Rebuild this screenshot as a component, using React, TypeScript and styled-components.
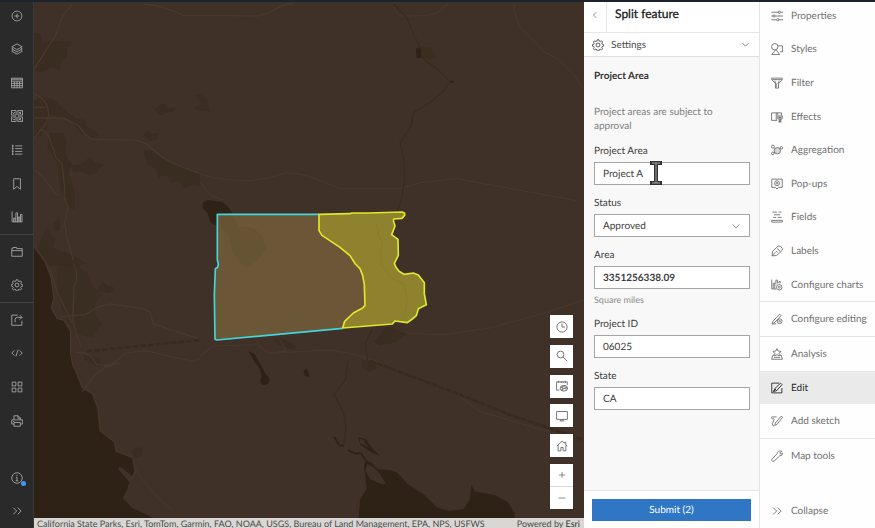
import React from "react";
import styled, { createGlobalStyle } from "styled-components";

const GlobalStyle = createGlobalStyle`
  *, *::before, *::after { box-sizing: border-box; }
  body { margin: 0; }
  body, button, input, select {
    font-family: Lato, "Open Sans", "Liberation Sans", sans-serif;
    font-size: 10px;
    text-rendering: geometricPrecision;
  }
  button { border: 0; background: none; padding: 0; margin: 0; color: inherit; cursor: pointer; }
`;

const Page = styled.div`
  display: flex;
  height: 100vh;
  overflow: hidden;
  border-top: 2px solid #1d232e;
  color: #323232;
`;

/* ---------- icons ---------- */

const Svg = styled.svg<{ $size: number }>`
  display: block;
  flex: none;
  width: ${(p) => p.$size}px;
  height: ${(p) => p.$size}px;
  fill: none;
  stroke: currentColor;
  stroke-width: 1.2;
`;

const shapes = {
  plusCircle: <><circle cx="8" cy="8" r="6.6" /><path d="M8 4.8v6.4M4.8 8h6.4" /></>,
  layers: (
    <>
      <path d="M8 1.2 15 5 8 8.800 1 5z" />
      <path d="M2.800 7 1 8l7 3.800L15 8l-1.800-1M2.800 10 1 11l7 3.800 7-3.800-1.800-1" />
    </>
  ),
  table: <><path d="M.6 1.600h14.800v12.800H.6zM.6 3h14.800M.6 5.500h14.800M4.500 5.500v9M8 5.500v9M11.500 5.500v9M.6 8.500h14.800M.6 11.500h14.800" /></>,
  basemap: (
    <>
      <path d="M.6.6h6.200v6.200H.6zM9.200.6h6.200v6.200H9.200zM.6 9.200h6.200v6.200H.6zM9.200 9.200h6.200v6.200H9.200z" />
      <path d="m2 3 1.500 2L5.500 2.500M10.500 2.500l3 3M13.500 2l-2 3M2 11.500l2 2 2-2.500M10.500 13.500l3-3M11 11l2.500 3" />
    </>
  ),
  legend: <path d="M5.500 2.500H15M5.500 6.200H15M5.500 9.900H15M5.500 13.500H15M1.200 2.500h2.200M1.200 6.200h2.200M1.200 9.900h2.200M1.200 13.500h2.200M2.300.8v14" />,
  bookmark: <path d="M3.500 1h9v14L8 11.300 3.500 15z" />,
  chart: <path d="M1.500.5v14H15M3.500 14.500v-5h2v5M6.500 14.500v-12h2.200v12M9.700 14.500V8h2v6.500M12.700 14.500V4.500h2v10" />,
  folder: <path d="M1 13.700V3.500h1.500V2h5v1.500H15v10.200zM1 6.200h14" />,
  gear: (
    <>
      <circle cx="8" cy="8" r="2.600" />
      <path d="M6.900 1h2.200l.4 1.800 1.500.6 1.600-1 1.500 1.600-1 1.600.6 1.500 1.800.4v2l-1.800.4-.6 1.500 1 1.600-1.500 1.600-1.600-1-1.500.6-.4 1.800H6.900l-.4-1.800-1.500-.6-1.600 1L1.900 13l1-1.600-.6-1.500-1.800-.4v-2l1.800-.4.6-1.500-1-1.600 1.500-1.600 1.600 1 1.500-.6z" />
    </>
  ),
  share: <path d="M9 1.500H1v13.500h13.500v-6M5.500 11V7.500q0-3 3-3h6M11.700 1.500l3 3-3 3" />,
  code: <path d="M4.500 4.500 1 8l3.500 3.500M11.500 4.500 15 8l-3.500 3.500M9.500 3.500l-3 9" />,
  grid: <path d="M1.500 1.500h5v5h-5zM9.500 1.500h5v5h-5zM1.500 9.500h5v5h-5zM9.500 9.500h5v5h-5z" />,
  print: (
    <>
      <path d="M4 6.500V1h5.500l3 3v2.500M9.200 1v3.200h3.200M4 12H1V6.500h14.500V12h-3M2.800 8.700h1.500" />
      <path d="M4 10h8.500v5H4z" />
    </>
  ),
  info: <><circle cx="8" cy="8" r="7" /><path d="M8 3.800v1.700M6.500 7.200H8v4.500M6.300 11.700h3.400" /></>,
  doubleRight: <path d="M3 3.500 7.500 8 3 12.500M9 3.500 13.500 8 9 12.500" />,
  clock: <><circle cx="8" cy="8" r="6.800" /><path d="M8 3.500V8h4" /></>,
  search: <><circle cx="6" cy="6" r="4.500" /><path d="m9.300 9.300 5.500 5.500" /></>,
  calendar: (
    <>
      <path d="M4.500 13.500H.800v-11H15v4M3.500 1v3M7 2v2M9.500 2v2M12.500 1v3" />
      <ellipse cx="10.500" cy="11" rx="5" ry="3.800" />
      <path d="M5.800 10.500q4-4 9 0M7 13q3-3 8-1M9 8.500v5" />
    </>
  ),
  monitor: <path d="M.800 2h14.400v10.500H.800zM5 14.500h6M6.500 12.500v2M9.500 12.500v2" />,
  home: <path d="M1 8.300 8 1.500l3 2.800V3h2v3.200l2 2.100M2.800 7v7.500h3.700V10h3v4.500h3.700V7" />,
  plus: <path d="M8 3v10M3 8h10" />,
  minus: <path d="M2.500 8h11" />,
  left: <path d="M10 3.500 5.500 8l4.500 4.500" />,
  down: <path d="M2.500 5.500 8 11l5.500-5.500" />,
  sliders: (
    <>
      <path d="M.5 3h9M12.500 3H16M.5 8h2M5.500 8H16M.5 13h7M10.500 13H16" />
      <circle cx="11" cy="3" r="1.500" /><circle cx="4" cy="8" r="1.500" /><circle cx="9" cy="13" r="1.500" />
    </>
  ),
  styles: (
    <>
      <circle cx="5" cy="5" r="4.200" />
      <path d="M9 3.800h6.300v8H12M6.500 8.500 11.500 15.300H1z" />
    </>
  ),
  filter: <path d="M1 1.500h14v2L10 9v5.800H6V9L1 3.500zM1.500 3.500h13M5 5l2 4.500V14M11 5 9 9" />,
  effects: (
    <>
      <path d="M8 12.500H.800v-10H14V6M7 2.500v10M9 2.500v3.500" />
      <path d="M9 6.500h6v4H9z" /><path d="M11 10.500v4h2v-4M10 8.500h4" strokeWidth="1.600" />
    </>
  ),
  aggregation: (
    <>
      <circle cx="8.500" cy="9" r="4.200" fill="currentColor" fillOpacity=".25" />
      <circle cx="2.500" cy="3.500" r="2" /><circle cx="2.500" cy="12.500" r="1.700" /><circle cx="14" cy="5" r="1.600" />
      <path d="m4 5 1.500 1.500M4 11.800l1-.8M12.600 6l-1 .8" />
    </>
  ),
  popup: (
    <>
      <path d="M1 1.500h14v11h-5l-2 2.300-2-2.300H1z" />
      <circle cx="8" cy="7" r="3.300" /><circle cx="8" cy="7" r="1.100" />
    </>
  ),
  fields: <path d="M2 1.500h6M10 1.500h4M4 5h8M3 8.500h4M9 8.500h5M1 12.500h14v2.300H1z" />,
  label: (
    <>
      <path d="m1.500 14.500.5-6L9.500 1.500h3l2.500 3v2.500L7.500 14z" />
      <path d="M1.500 14.500 6 9.500M8.500 4.500l4 4.500M6.500 8l2 2" />
    </>
  ),
  chartGear: (
    <>
      <path d="M1 .800v12.500h6M3 13V5.500h2V13M6.500 7V1.500h2V6M10.500 5.500V3.500h2v2" />
      <circle cx="11" cy="11" r="3.700" /><circle cx="11" cy="11" r="1.300" />
    </>
  ),
  editGear: (
    <>
      <path d="m1.500 14.500 1-3.500L11.500 1.500l2 2-9 9.500zM1.500 14.500H7" />
      <circle cx="11.500" cy="11" r="3.200" /><circle cx="11.500" cy="11" r="1" />
    </>
  ),
  analysis: (
    <>
      <path d="M8 .800 9.500 4l4 .5-2.800 2.500.6 3.500L8 9l-3.300 1.500.6-3.500L2.500 4.500l4-.5z" />
      <path d="M4 9.500H2.500L.800 15h14.400l-1.700-5.500H12M4 12.500h8" />
    </>
  ),
  edit: (
    <>
      <path d="M11 1.500H1v13h13.500V8" />
      <path d="m4 12.500 1-3.500 7.800-7.500 2 2L7.500 11.500zM5 9l2.500 2.500" />
      <path d="m2.500 13.500 2-3" />
    </>
  ),
  sketch: (
    <>
      <path d="M7.500 2.500H1.500q-1 0-1 1.200T2 5h1.500q1 .3.500 1.500L2 11.500Q1.500 14.500 4 14.500" />
      <path d="m5 14 .8-3.300 7.700-9.200 2 1.700-7.500 9.200z" />
    </>
  ),
  wrench: <path d="M14.300 1.500 12 3.800l.5 1.500 1.500-.1 1.300-1.400q.5 4-3.800 4L4 15 2 15.200 1 14v-1.700L8.300 5q0-4.500 6-3.500z" />,
};

type IconName = keyof typeof shapes;

const Icon = ({ name, size = 12 }: { name: IconName; size?: number }) => (
  <Svg viewBox="0 0 16 16" $size={size} aria-hidden="true">
    {shapes[name]}
  </Svg>
);

/* ---------- left rail ---------- */

const Rail = styled.nav`
  flex: 0 0 34px;
  display: flex;
  flex-direction: column;
  margin-top: -3px;
  background: #2a2a2a;
  border-right: 1px solid #3c3a38;
  color: #a5a5a5;
`;

const RailGroup = styled.div<{ $rows: number; $divided?: boolean }>`
  flex: ${(p) => p.$rows} 1 0;
  display: flex;
  flex-direction: column;
  border-bottom: ${(p) => (p.$divided ? "1px solid #454545" : "0")};
`;

const RailButton = styled.button`
  flex: 1 1 0;
  display: flex;
  align-items: center;
  justify-content: center;
`;

const Spacer = styled.div<{ $grow: number }>`
  flex: ${(p) => p.$grow} 1 0;
`;

const Notified = styled.span`
  position: relative;
`;

const Dot = styled.span`
  position: absolute;
  right: -3px;
  bottom: -2px;
  width: 5px;
  height: 5px;
  border-radius: 50%;
  background: #3d9bf5;
`;

/* ---------- map ---------- */

const MapArea = styled.main`
  position: relative;
  flex: 1 1 0;
  min-width: 0;
  display: flex;
  flex-direction: column;
  background: #3f3127;
`;

const MapDrawing = styled.svg`
  display: block;
  flex: 1 1 0;
  min-height: 0;
  width: 100%;
`;

const Attribution = styled.footer`
  flex: 0 0 10px;
  display: flex;
  justify-content: space-between;
  padding: 0 4px 0 3px;
  background: #d9d6d3;
  color: #4c4c4c;
  font-size: 9px;
  line-height: 12px;
  white-space: nowrap;
  overflow: hidden;

  a { color: #323232; }
`;

const MapControls = styled.div`
  position: absolute;
  right: 11px;
  bottom: 19px;
  display: flex;
  flex-direction: column;
  gap: 7px;
`;

const ToolStack = styled.div`
  display: flex;
  flex-direction: column;
  justify-content: space-between;
  height: 142px;
`;

const MapButton = styled.button<{ $height?: number }>`
  display: flex;
  align-items: center;
  justify-content: center;
  width: 23px;
  height: ${(p) => p.$height ?? 23}px;
  background: #fff;
  color: #6a6a6a;
`;

const ZoomPair = styled.div`
  display: grid;
  gap: 1px;
  background: #dcdcdc;
`;

const Basemap = () => (
  <MapDrawing viewBox="102 6 1650 1548" preserveAspectRatio="xMidYMid slice" role="img" aria-label="Map of project areas">
    <rect x="102" y="6" width="1650" height="1548" fill="#3f3127" />
    {/* urban patches */}
    <g fill="#392c20">
      <path d="M102 100l18 0 8 30 20-8 50 4 16-6 0 16-14 6 2 30-18 12-6 26-26-8-30 16-20-8z" />
      <path d="M118 288l40 10 50 42 20 16 26 4 6 20 30 16 10 12-30 6-30-16-26-36-60-16-46-2-16-20z" />
      <path d="M102 300l30 6 14 30-4 44-20 26-20 8z" />
      <path d="M150 400l40-2 10 24-4 40 20 30-10 30 18 50 0 56-20-8-22-50-10-80-30-50z" />
      <path d="M215 498l30-6 22-20 20 14 26 10-18 12-4 10-28 6-18-10-26 2z" />
      <path d="M464 328l22-18 12 6 2 10 26-4-2 12-24 4-16 8-8-6z" />
      <path d="M584 322l16-4 4-12-14-12-4-12 16 2 20 12 4 26 6 12-20-2-26-4z" />
      <path d="M430 450l30 2 40 30 54 20 46 24 0 32-20-4-30 10-14-22-22 8-12-26-26 8-10-26-24-14z" />
      <path d="M430 404l14-14 10 12 24-2-10 20-20 4z" />
      <path d="M160 668l14-12 8 14-6 24-14-4zM130 700l12-20 8 24 16 10-8 30 60 20 40 26-30 8-80-2-34-50z" />
      <path d="M170 792l60 0 34 30 16 40 30 20-26 30 4 40 20 20-30 40-50-10-40-60-16-90z" opacity=".7" />
      <path d="M298 858l10-14 12 12 24 8 0 10-16 6-34-8zM392 1352l22-10 14 2-4 22-16 8z" />
      <path d="M250 1064l50 10 4 28-20-6-30-18z" />
      <path d="M820 1016l30 0 36 20 0 14-30-6-26-12z" />
    </g>
    {/* ocean */}
    <path
      fill="#2e2217"
      d="M102 738l34 48 18 50 8 60-8 26 18 34 20 4 20 34 0 64 6 36 14 30 14 38 32 20 16 44 6 66 44 34 4 28 50 18 8 42-10 14-24-20-14-8-4 6 34 40-6 20-14 28 14 14 14 16 22 10 42 20H102z"
    />
    <path fill="none" stroke="#46372a" strokeWidth="4" d="M102 738l34 48 18 50 8 60-8 26 18 34 20 4 20 34 0 64 6 36 14 30 14 38 32 20 16 44 6 66 44 34 4 28 50 18 8 42-10 24" />
    {/* roads on the coast */}
    <g fill="none" stroke="#47392c" strokeWidth="4">
      <path d="M218 12q-34 34-40 64l-14 36-24 36-38 60" />
      <path d="M102 322h36M102 354h90l44 24 20 26 20 14 130 2 34 12q30 30 70 54l86 34" />
      <path d="M102 282q44 16 44 64-4 26-24 44l-20 26M124 388q24 14 30 44l14 40 18 20 8 70-2 28 12 30-10 50 8 50 18 60" />
      <path d="M102 510q26 14 44 44l30 36M222 792q16 34 0 70l-4 100 8 30 18 50M148 800l22 70 46 100M180 950l76-6 44-26 30-6 100 14 20 10 10 36 130 42" />
      <path d="M230 1058q40-6 60 36l40 4 46-38 60-8 140 32 24-8M246 1174l40-50 40-30 36-4" />
      <path d="M408 1400l12 30 50 60 50 44" opacity=".6" />
      <path d="M430 12q60 4 120 34l90 0 130 2q30-4 60-22t50-14" />
    </g>
    {/* roads inland */}
    <g transform="translate(600 0)" fill="none" stroke="#47392c" strokeWidth="3">
      <path d="M580 12q6 40 30 36 80 0 100-8l34-28M942 12q4 50 20 70l40 40 30 34 40 20q50 40 72 84" />
      <path d="M0 522q60 20 150 20 60-6 110-24 60 6 80 16l80 32h180l60-18 110-12 360 66" />
      <path d="M0 546l30 40 40 14M0 1068l40-30 130-4 40 26 180-10 60 10 100 30M570 990l60 10 100 4 140-20 160-44 120-40" />
      <path d="M240 1020l20 34-60 6-30-34M780 1190l60 44 80 24 100 30 130 30" />
    </g>
    {/* rivers, lakes and the border */}
    <g transform="translate(600 0)">
      <g fill="none" stroke="#382b1f" strokeWidth="4">
        <path d="M580 12l40 40 20 50 20 40M670 176l40 30 40 38-20 30-40 34-50 30-6 40-34 50 10 40 4 70-10 60-16 50-20 30" />
        <path d="M444 1080l-8 60-34 44 28 50 8 50-6 50M516 990l-20 40 6 50" />
      </g>
      <path d="M402 1310l16 26 14 2M444 1350l20 10 20 0 16 26" fill="none" stroke="#2e2217" strokeWidth="5" />
      <path d="M-340 1054L-180 1038 0 1020" fill="none" stroke="#382b1e" strokeWidth="8" strokeDasharray="18 5" />
      <path d="M510 1082l160 60 130 50 130 52 220 76" fill="none" stroke="#382b1e" strokeWidth="8" strokeDasharray="18 4" />
      <g fill="#2e2217">
        <path d="M8 608l14-8 44 6 18 14 14 20-42 2 0 40-24-14-10-30-14-14z" />
        <path d="M648 146l14-4 2 32-14 0zM750 242l12 2-4 6-8-4z" />
        <path d="M146 1054l18 8 20 36 14 26 10 14-2 10-10 8-10-2-6-12 6-14-10-26-16-22z" />
        <circle cx="195" cy="1139" r="13" />
        <path d="M310 1112l10-6 8 18 0 8-12-4z" />
        <path
          fillRule="evenodd"
          d="M496 1382l20 6 16 20 40 2 20 8 34 36 44 28 40 40 34 10 46-4 20-30 4-44 10 20 60 12 40 20 20 34 0 14H476l4-54 20-34-8-70zM502 1392l-6 20 14 26 40 16 6-6-16-26-20-20z"
        />
        <path fillRule="evenodd" d="M474 1312l22 4 20 28 24 24-28-12-30-22zM480 1316l0 12 26 16-16-24z" />
      </g>
      <path d="M664 140l30 2 14 32-20 4-24-8z" fill="#3b2e1e" />
      <path d="M486 1080l40 4 0 24-20 8-20-14zM560 980l60 20-30 26-50 10-20-10z" fill="#392c20" />
    </g>
    {/* the two halves of the split feature */}
    <g transform="translate(600 0)" strokeLinejoin="round" strokeWidth="5">
      <path
        fill="#6b5638"
        d="M52 643H357V692L366 706 420 742 450 767 466 792 480 806 488 826 493 854 495 916 488 924 460 939 434 964 428 985 50 1020 45 1018 43 884 46 806 53 802 55 792 52 780z"
      />
      <path d="M60 650l34-6 24 36 44 4 24 26 14 34-14 14-14 24-28 20-20-10-26-40-14-52-22-20z" fill="#655333" />
      <path d="M357 643H52V780L55 792 53 802 46 806 43 884 45 1018 50 1020 428 985" fill="none" stroke="#42d5da" />
      <path
        fill="#8e822f"
        stroke="#dfe82c"
        d="M357 643L450 641 455 639 505 639 607 636 614 640 614 646 606 655 582 657 580 662 585 678 575 704 594 718 595 766 583 790 588 802 597 814 612 823 640 819 655 825 673 848 673 882 679 914 655 926 649 947 637 957 622 968 585 963 577 972 428 984 434 964 460 939 488 924 495 916 493 854 488 826 480 806 466 792 450 767 420 742 366 706 357 692z"
      />
      <path d="M530 670l6 36 10 20-4 66 30 40 40 20 10 50-8 40" fill="none" stroke="#897d2d" strokeWidth="3" />
    </g>
  </MapDrawing>
);

/* ---------- edit panel ---------- */

const Panel = styled.section`
  flex: 0 0 176px;
  display: flex;
  flex-direction: column;
  background: #f8f8f8;
  border-right: 1px solid #e4e4e4;
`;

const PanelHeader = styled.header`
  display: flex;
  align-items: stretch;
  height: 31px;
  background: #fff;
  border-bottom: 1px solid #e6e6e6;
`;

const BackButton = styled.button`
  display: flex;
  justify-content: center;
  width: 23px;
  padding-top: 8px;
  border-right: 1px solid #e6e6e6;
  color: #6a6a6a;
`;

const PanelTitle = styled.h2`
  margin: 0;
  padding: 4px 8px;
  font-size: 12px;
  line-height: 16px;
  font-weight: 400;
  color: #202020;
  -webkit-text-stroke: 0.3px;
`;

const SettingsRow = styled.button`
  display: flex;
  align-items: center;
  gap: 7px;
  height: 24px;
  padding: 0 9px 0 8px;
  background: #fff;
  border-bottom: 1px solid #e0e0e0;
  color: #4a4a4a;

  span { flex: 1; text-align: left; }
`;

const Form = styled.form`
  flex: 1;
  display: flex;
  flex-direction: column;
`;

const Fields = styled.div`
  flex: 1;
  display: flex;
  flex-direction: column;
  gap: 10px;
  padding: 11px 9px 10px 10px;
`;

const FormIntro = styled.div`
  display: flex;
  flex-direction: column;
  gap: 21px;
`;

const FormTitle = styled.h3`
  margin: 0;
  font-size: 10px;
  line-height: 16px;
  font-weight: 700;
`;

const Description = styled.p`
  margin: 0;
  line-height: 14px;
  color: #7c7c7c;
`;

const Field = styled.div`
  display: flex;
  flex-direction: column;
`;

const Label = styled.label`
  margin-bottom: 3px;
  line-height: 16px;
  color: #3c3c3c;
`;

const Control = styled.div`
  position: relative;
  display: flex;
`;

const Input = styled.input<{ $strong?: boolean }>`
  width: 100%;
  height: 23px;
  padding: 0 8px;
  border: 1px solid #a6a6a6;
  border-radius: 0;
  background: #fff;
  color: #3c3c3c;
  font-weight: ${(p) => (p.$strong ? 700 : 400)};
`;

const Select = styled.select`
  appearance: none;
  width: 100%;
  height: 23px;
  padding: 0 24px 0 8px;
  border: 1px solid #a6a6a6;
  border-radius: 0;
  background: #fff;
  color: #3c3c3c;
`;

const SelectArrow = styled.span`
  position: absolute;
  right: 9px;
  top: 7px;
  color: #6a6a6a;
  pointer-events: none;
`;

const Hint = styled.span`
  margin-top: 4px;
  font-size: 9px;
  line-height: 13px;
  color: #8a8a8a;
`;

const Cursor = styled.svg`
  position: absolute;
  left: 56px;
  top: -1px;
  width: 12px;
  height: 24px;
`;

const PanelFooter = styled.footer`
  padding: 8px 8px 7px;
  background: #fff;
  border-top: 1px solid #e6e6e6;
`;

const Submit = styled.button`
  display: block;
  width: 100%;
  height: 22px;
  background: #2f77c4;
  color: #fff;
`;

/* ---------- right menu ---------- */

const Menu = styled.nav`
  flex: 0 0 115px;
  display: flex;
  flex-direction: column;
  margin-top: -3px;
  background: #fefefe;
`;

const MenuGroup = styled.div<{ $rows: number; $divided?: boolean }>`
  flex: ${(p) => p.$rows} 1 0;
  display: flex;
  flex-direction: column;
  border-bottom: ${(p) => (p.$divided ? "1px solid #e4e4e4" : "0")};
`;

const MenuButton = styled.button<{ $active?: boolean }>`
  flex: 1 1 0;
  display: flex;
  align-items: center;
  gap: 8px;
  padding-left: 11px;
  white-space: nowrap;
  background: ${(p) => (p.$active ? "#eaeaea" : "transparent")};
  color: ${(p) => (p.$active ? "#2b2b2b" : "#707070")};
`;

/* ---------- data ---------- */

const railGroups: { divided?: boolean; items: [IconName, string][] }[] = [
  {
    divided: true,
    items: [
      ["plusCircle", "Add"],
      ["layers", "Layers"],
      ["table", "Tables"],
      ["basemap", "Basemap"],
      ["legend", "Legend"],
      ["bookmark", "Bookmarks"],
      ["chart", "Charts"],
    ],
  },
  { divided: true, items: [["folder", "Save and open"], ["gear", "Map properties"]] },
  { items: [["share", "Share map"], ["code", "Embed"], ["grid", "Create app"], ["print", "Print"]] },
];

const menuGroups: { divided?: boolean; items: [IconName, string][] }[] = [
  {
    divided: true,
    items: [
      ["sliders", "Properties"],
      ["styles", "Styles"],
      ["filter", "Filter"],
      ["effects", "Effects"],
      ["aggregation", "Aggregation"],
      ["popup", "Pop-ups"],
      ["fields", "Fields"],
      ["label", "Labels"],
      ["chartGear", "Configure charts"],
    ],
  },
  { divided: true, items: [["editGear", "Configure editing"]] },
  { divided: true, items: [["analysis", "Analysis"], ["edit", "Edit"], ["sketch", "Add sketch"]] },
  { items: [["wrench", "Map tools"]] },
];

const mapTools: [IconName, string][] = [
  ["clock", "History"],
  ["search", "Search"],
  ["calendar", "Time"],
  ["monitor", "Full screen"],
  ["home", "Default view"],
];

export default function App() {
  return (
    <>
      <GlobalStyle />
      <Page>
        <Rail aria-label="Contents">
          {railGroups.map((group, i) => (
            <RailGroup key={i} $rows={group.items.length} $divided={group.divided}>
              {group.items.map(([icon, name]) => (
                <RailButton key={name} type="button" aria-label={name}>
                  <Icon name={icon} />
                </RailButton>
              ))}
            </RailGroup>
          ))}
          <Spacer $grow={0.7} />
          <RailGroup $rows={2}>
            <RailButton type="button" aria-label="Information">
              <Notified>
                <Icon name="info" />
                <Dot />
              </Notified>
            </RailButton>
            <RailButton type="button" aria-label="Expand">
              <Icon name="doubleRight" />
            </RailButton>
          </RailGroup>
        </Rail>

        <MapArea>
          <Basemap />
          <Attribution>
            <span>California State Parks, Esri, TomTom, Garmin, FAO, NOAA, USGS, Bureau of Land Management, EPA, NPS, USFWS</span>
            <span>
              Powered by <a href="#esri">Esri</a>
            </span>
          </Attribution>
          <MapControls>
            <ToolStack>
              {mapTools.map(([icon, name]) => (
                <MapButton key={name} type="button" aria-label={name}>
                  <Icon name={icon} />
                </MapButton>
              ))}
            </ToolStack>
            <ZoomPair>
              <MapButton type="button" aria-label="Zoom in" $height={22}>
                <Icon name="plus" size={10} />
              </MapButton>
              <MapButton type="button" aria-label="Zoom out" $height={22}>
                <Icon name="minus" size={10} />
              </MapButton>
            </ZoomPair>
          </MapControls>
        </MapArea>

        <Panel>
          <PanelHeader>
            <BackButton type="button" aria-label="Back">
              <Icon name="left" size={10} />
            </BackButton>
            <PanelTitle>Split feature</PanelTitle>
          </PanelHeader>
          <SettingsRow type="button">
            <Icon name="gear" />
            <span>Settings</span>
            <Icon name="down" size={9} />
          </SettingsRow>
          <Form onSubmit={(e) => e.preventDefault()}>
            <Fields>
              <FormIntro>
                <FormTitle>Project Area</FormTitle>
                <Description>Project areas are subject to approval</Description>
              </FormIntro>
              <Field>
                <Label htmlFor="project-area">Project Area</Label>
                <Control>
                  <Input id="project-area" defaultValue="Project A" />
                  <Cursor viewBox="0 0 12 24" aria-hidden="true">
                    <path d="M0 2H12M6 2V22M0 22H12" fill="none" stroke="#333" strokeWidth="4" />
                    <path d="M2 2H10M6 2V22M2 22H10" fill="none" stroke="#a5a5a5" strokeWidth="1" />
                  </Cursor>
                </Control>
              </Field>
              <Field>
                <Label htmlFor="status">Status</Label>
                <Control>
                  <Select id="status" defaultValue="Approved">
                    <option>Approved</option>
                  </Select>
                  <SelectArrow>
                    <Icon name="down" size={10} />
                  </SelectArrow>
                </Control>
              </Field>
              <Field>
                <Label htmlFor="area">Area</Label>
                <Input id="area" defaultValue="3351256338.09" $strong />
                <Hint>Square miles</Hint>
              </Field>
              <Field>
                <Label htmlFor="project-id">Project ID</Label>
                <Input id="project-id" defaultValue="06025" />
              </Field>
              <Field>
                <Label htmlFor="state">State</Label>
                <Input id="state" defaultValue="CA" />
              </Field>
            </Fields>
            <PanelFooter>
              <Submit type="submit">Submit (2)</Submit>
            </PanelFooter>
          </Form>
        </Panel>

        <Menu aria-label="Layer settings">
          {menuGroups.map((group, i) => (
            <MenuGroup key={i} $rows={group.items.length} $divided={group.divided}>
              {group.items.map(([icon, name]) => (
                <MenuButton key={name} type="button" $active={name === "Edit"}>
                  <Icon name={icon} />
                  {name}
                </MenuButton>
              ))}
            </MenuGroup>
          ))}
          <Spacer $grow={0.65} />
          <MenuGroup $rows={1}>
            <MenuButton type="button">
              <Icon name="doubleRight" />
              Collapse
            </MenuButton>
          </MenuGroup>
        </Menu>
      </Page>
    </>
  );
}
